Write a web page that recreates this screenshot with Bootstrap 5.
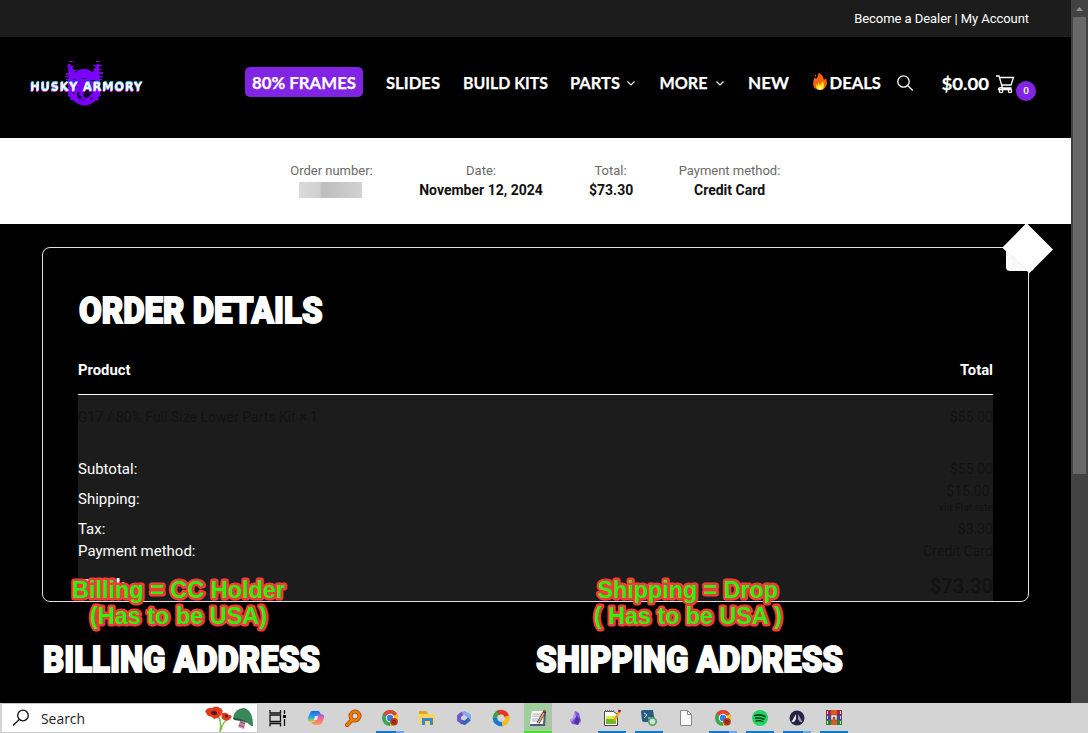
<!DOCTYPE html>
<html lang="en">
<head>
<meta charset="utf-8">
<meta name="viewport" content="width=device-width, initial-scale=1">
<title>Husky Armory - Order received</title>
<link href="https://cdn.jsdelivr.net/npm/bootstrap@5.3.0/dist/css/bootstrap.min.css" rel="stylesheet">
<style>
body{font-family:Roboto,"Liberation Sans",sans-serif;background:#000;color:#fff;height:733px;overflow:hidden}
svg{display:block;flex:none;overflow:visible}
svg text{white-space:pre}
.site{height:703px}
.page-col{width:1071px;background:#000}
.topbar{height:37px;background:#1c1c1c;font-size:13px;padding-right:42px;letter-spacing:-.06px}
.site-head{height:101px;padding-left:30px}
.brand-mark{width:215px}
.main-menu{font:700 17.4px/30px Lato,sans-serif;height:30px;margin-top:-11px}
.main-menu a{color:#fff;text-decoration:none;white-space:nowrap}
.hot{background:#8224e3;border-radius:5px;width:118px;margin-right:23px;justify-content:center}
.main-menu svg text,.cart-sum text{font:700 17.6px Lato,sans-serif;fill:#fff;stroke:#fff;stroke-width:.25}
.count-dot{width:20px;height:20px;border-radius:50%;background:#8224e3;font:700 9px/20px Lato,sans-serif;text-align:center;margin:17px 0 0 0}
.summary{height:86px;background:#fff;color:#111;padding:23px 0 0 291px;font-size:13px}
.summary .lbl{color:#6b6b6b;line-height:19px;letter-spacing:-.01px}
.summary .val{font-weight:700;font-size:14px;line-height:20px}
.masked{width:63px;height:16px;background:linear-gradient(90deg,#dadada,#d0d0d0 33%,#bebebe 36%,#c6c6c6 65%,#d1d2d4);margin:2px 0 0 8px}
.order-box{height:355px;margin:23px 42px 0 42px;border:1px solid #e2e2e2;border-radius:8px;padding:0 35px;position:relative}
.title-text{font:900 37px Roboto,sans-serif;fill:#fff;stroke:#fff;stroke-width:1.8px;stroke-linejoin:miter}
.thead-row{height:50px;border-bottom:1px solid #fff;font-weight:700;font-size:14.8px;padding-top:2px}
.lines{background:#1c1c1c;height:206px;font-size:14.5px}
.row-label{font-size:15px}
.lines .amt{color:#131313;text-align:right;font-size:14px}
.lines .grand{font-size:20px}
.corner{position:absolute;right:-26px;top:-25px}
.note{position:absolute}
.note text{font:700 23.5px "Liberation Sans",sans-serif;fill:#2bf20c;stroke:#f23a3a;stroke-width:5px;stroke-linejoin:round;paint-order:stroke}
.sb{width:17px;background:#424242}
.thumb{width:13px;height:457px;background:#686868}
.taskbar{height:30px;background:#d4d4d4}
.find{width:256px;height:30px;margin-left:2px;background:#fff;border:1px solid #c4c8ca;border-left:0;color:#222}
.slot{width:37px;height:30px;position:relative;display:flex;align-items:center;justify-content:center}
.slot-first{width:39px}
.run::after,.multi::after{content:"";position:absolute;left:5px;bottom:0;width:28px;height:2px;background:#0f79d0}
.multi::after{background:linear-gradient(90deg,#0f79d0 20px,#69abe2 20px)}
.active-app{background:linear-gradient(90deg,transparent 5px,#a0cf9b 5px 31px,#bbb 31px 33px,transparent 33px)}
.active-app::after{background:#46e231}
</style>
</head>
<body>
<div class="site d-flex">
<div class="page-col position-relative">
  <div class="topbar d-flex align-items-center justify-content-end"><span>Become a Dealer | My Account</span></div>

  <header class="site-head d-flex align-items-center">
    <div class="brand-mark">
      <svg width="114" height="56" viewBox="0 0 114 56">
        <g fill="#7b00ff" transform="translate(0 -2)">
          <path d="M38 6h2l5 8v1q3-4 9-4t9 4v-1l4-8h2v10l1 4v15q0 5-5 8-10 9-21 0-6-4-6-8V22l1-4z"/>
          <path d="M39 3h4v1h-4zM37 8h7v1h-7zM38 12h9v1h-9zM66 3h4v1h-4zM63 7h9v1h-9zM63 11h8v1h-8zM36 15h13v2H36zM61 14h12v2H61zM35 18h38v1H35zM36 21h36v1H36zM36 32h38v1H36zM38 37h33v1H38zM40 41h29v1H40z"/>
        </g>
        <path fill="#15002b" d="M43 19h3v1h-3zM52 18h4v1h-4zM60 20h5v1h-5zM47 32l3 1-1 2 3 2-2 3-3-4zM54 31l5-2 4 3-4 5-4 1-2-2zM43 31l2 4-2-1zM52 39l3 1-2 1zM61 37l2 1-3 3z"/>
        <g font-family="DejaVu Sans,sans-serif" font-weight="700" font-size="11.5">
          <text x="-.4" y="31.800" fill="#d33ddc" textLength="112">HUSKY ARMORY</text>
          <text x=".6" y="30.200" fill="#21cbd6" textLength="112">HUSKY ARMORY</text>
          <text x="0" y="31" fill="#f3f5ff" textLength="112">HUSKY ARMORY</text>
        </g>
      </svg>
    </div>
    <nav class="main-menu d-flex align-items-center">
      <a class="hot d-flex" href="#"><svg width="104" height="30"><text y="21.500" textLength="104" lengthAdjust="spacingAndGlyphs">80% FRAMES</text></svg></a>
      <a href="#"><svg width="77" height="30"><text y="21.500" textLength="54" lengthAdjust="spacingAndGlyphs">SLIDES</text></svg></a>
      <a href="#"><svg width="107" height="30"><text y="21.500" textLength="85" lengthAdjust="spacingAndGlyphs">BUILD KITS</text></svg></a>
      <a href="#"><svg width="90" height="30"><text y="21.500" textLength="50" lengthAdjust="spacingAndGlyphs">PARTS</text><path d="M57.500 14.500l3.500 3.500 3.500-3.500" fill="none" stroke="#fff" stroke-width="1.200"/></svg></a>
      <a href="#"><svg width="88" height="30"><text y="21.500" x="-.5" textLength="48" lengthAdjust="spacingAndGlyphs">MORE</text><path d="M56.500 14.500l3.500 3.500 3.500-3.500" fill="none" stroke="#fff" stroke-width="1.200"/></svg></a>
      <a href="#"><svg width="64" height="30"><text y="21.500" textLength="41" lengthAdjust="spacingAndGlyphs">NEW</text></svg></a>
      <a href="#"><svg width="85" height="30"><g transform="translate(1 0)"><path fill="#f7630c" d="M5 6q5 1 6 7l2-2q1 3 1 6-2 6-7 6-6 0-7-6 0-4 2-7l1 2q3-3 2-6"/><path fill="#f7630c" d="M2 8h1v1H2z"/><path fill="#ffe019" d="M5 15l2 3 3-4q3 9-3 9-5-1-4-6l2 2z"/><path fill="#fff3b0" d="M5 21l2-2 2 2-2 2z"/></g><text y="21.500" x="17.500" textLength="51.500" lengthAdjust="spacingAndGlyphs">DEALS</text></svg></a>
      <svg width="45" height="30" fill="none" stroke="#fff" stroke-width="1.300"><circle cx="6.500" cy="14.500" r="5.700"/><path d="M10.800 18.800l5 4.700"/></svg>
      <svg class="cart-sum" width="74" height="30"><text y="22.500" x="-.5" textLength="47.500" lengthAdjust="spacingAndGlyphs">$0.00</text><g fill="none" stroke="#fff" stroke-width="1.300"><path d="M54 9h3l3.500 12h9M58 10.500h13.500L69 18H60M60.500 21q-4-1-4 1.500h13"/><circle cx="59" cy="24" r="1.700"/><circle cx="68" cy="24" r="1.700"/></g></svg>
      <span class="count-dot">0</span>
    </nav>
  </header>

  <section class="summary d-flex text-center">
    <div style="width:82px"><div class="lbl text-nowrap" style="margin-left:-1px">Order number:</div><div class="masked"></div></div>
    <div style="width:216px"><div class="lbl">Date:</div><div class="val">November 12, 2024</div></div>
    <div style="width:43px"><div class="lbl">Total:</div><div class="val">$73.30</div></div>
    <div style="width:195px"><div class="lbl">Payment method:</div><div class="val">Credit Card</div></div>
  </section>

  <section class="order-box">
    <svg width="300" height="97"><text class="title-text" x="1" y="75" textLength="243.500" lengthAdjust="spacingAndGlyphs">ORDER DETAILS</text></svg>
    <div class="thead-row d-flex align-items-center justify-content-between"><span>Product</span><span>Total</span></div>
    <div class="lines">
      <div class="d-flex justify-content-between align-items-center" style="height:45px"><span class="amt">G17 / 80% Full Size Lower Parts Kit × 1</span><span class="amt">$55.00</span></div>
      <div class="d-flex justify-content-between align-items-center" style="height:21px;margin-top:19px"><span class="row-label">Subtotal:</span><span class="amt">$55.00</span></div>
      <div class="d-flex justify-content-between align-items-center" style="height:38px"><span class="row-label">Shipping:</span><span class="amt lh-1 pt-1">$15.00&nbsp;<br><span style="font-size:10.500px;line-height:20px">via Flat rate</span></span></div>
      <div class="d-flex justify-content-between align-items-center" style="height:22px"><span class="row-label">Tax:</span><span class="amt">$3.30</span></div>
      <div class="d-flex justify-content-between align-items-center" style="height:22px"><span class="row-label">Payment method:</span><span class="amt">Credit Card</span></div>
      <div class="d-flex justify-content-between align-items-center fw-bold" style="height:30px;margin-top:9px"><span style="font-size:19px">Total:</span><span class="amt grand">$73.30</span></div>
    </div>
    <svg class="corner" width="52" height="52"><rect x="4" y="22" width="28" height="26" rx="4" fill="#fafafa"/><path d="M24.500 0L51 26.500 27.500 50 .5 24.500z" fill="#fff"/><path d="M.5 24.500L27.500 50" stroke="#e5e5e5" stroke-width=".8"/></svg>
  </section>

  <section class="d-flex" style="padding-left:42px">
    <svg width="493" height="90"><text class="title-text" x="1" y="70" textLength="277" lengthAdjust="spacingAndGlyphs">BILLING ADDRESS</text></svg>
    <svg width="400" height="90"><text class="title-text" x="1" y="70" textLength="307" lengthAdjust="spacingAndGlyphs">SHIPPING ADDRESS</text></svg>
  </section>

  <svg class="note" style="left:60px;top:570px" width="240" height="66"><text x="12" y="28" textLength="213" lengthAdjust="spacingAndGlyphs">Billing = CC Holder</text><text x="30" y="54" textLength="177" lengthAdjust="spacingAndGlyphs">(Has to be USA)</text></svg>
  <svg class="note" style="left:580px;top:570px" width="220" height="66"><text x="17.500" y="28" textLength="180.500" lengthAdjust="spacingAndGlyphs">Shipping = Drop</text><text x="14" y="54" textLength="188" lengthAdjust="spacingAndGlyphs">( Has to be USA )</text></svg>
</div>
<div class="sb d-flex flex-column align-items-center">
  <svg width="17" height="17"><path d="M5 11l3.500-4 3.500 4z" fill="#929292"/></svg>
  <div class="thumb"></div>
</div>
</div>

<footer class="taskbar d-flex">
  <div class="find d-flex align-items-center">
    <svg width="39" height="28" fill="none" stroke="#111" stroke-width="1.300"><circle cx="21" cy="11.500" r="5.300"/><path d="M17.300 15.500L11 21.500"/></svg>
    <svg width="163" height="28"><text x="0" y="20" font-family="Open Sans,sans-serif" font-size="14.500" fill="#222" textLength="44" lengthAdjust="spacingAndGlyphs">Search</text></svg>
    <svg width="54" height="28"><path d="M14 12q4 6 2 16M24 15q-6 4-7 11" fill="none" stroke="#79bb45" stroke-width="1.500"/><path fill="#e2391d" d="M1 7q3-4 7-3 4-3 8 0 4 2 2 5-2 5-8 6-2-3-6-3zM18 9q5-1 7 2 4 0 2 3-3 4-7 2-4-2-2-7"/><ellipse cx="10" cy="9" rx="3" ry="2" fill="#521b18"/><circle cx="22.500" cy="12" r="1.500" fill="#521b18"/><path fill="#cf8ba4" d="M37 14l5 2-2 9-6-2z"/><path stroke="#854867" d="M36 18l5 2M35 21l5 2"/><path fill="#3a885a" d="M29 14q2-10 11-10 9 2 9 18-1 1-3-1-4-5-14-5-3-1-3-2"/><path fill="#225b3a" d="M29 14q8-1 18 7-5-4-17-5z"/></svg>
  </div>
  <div class="slot slot-first"><svg width="18" height="18" fill="none" stroke="#111" stroke-width="1.300"><path d="M1 1v3h10.500V1M1 6h10.500v6.500H1zM1 17.500v-3h10.500v3M15.500 1v4M15.500 10v7"/><path d="M14 7.500h3" stroke-width="3"/></svg></div>
  <div class="slot"><svg width="18" height="18"><defs><linearGradient id="cpA" x2="0" y2="1"><stop stop-color="#1769e8"/><stop offset=".6" stop-color="#23afe3"/><stop offset="1" stop-color="#f2cd27"/></linearGradient><linearGradient id="cpB" x2="0" y2="1"><stop stop-color="#a75be6"/><stop offset=".5" stop-color="#f86e88"/><stop offset="1" stop-color="#f9a24b"/></linearGradient></defs><path fill="url(#cpA)" d="M5 2h6q2 0 3 4-4-1-5 3-1 4-3 4H4Q0 13 1 9l2-5q1-2 2-2"/><path fill="url(#cpB)" d="M13 5q5 0 4 4l-2 5q-1 2-4 2H7q-2-1-3-3 4 1 5-3 1-5 4-5"/><path fill="#e8e3ec" d="M8 7h3l-1 4H7z"/></svg></div>
  <div class="slot"><svg width="18" height="18" fill="none"><circle cx="11" cy="7" r="4.500" stroke="#a74300" stroke-width="4"/><path d="M8 11l-5 5" stroke="#a74300" stroke-width="4" stroke-linecap="round"/><circle cx="11" cy="7" r="4.500" stroke="#f37b05" stroke-width="2.500"/><path d="M8 11l-5 5" stroke="#f37b05" stroke-width="2.500" stroke-linecap="round"/></svg></div>
  <div class="slot multi"><svg width="18" height="18"><g id="browser" transform="translate(1 1)"><circle cx="8" cy="8" r="8" fill="#36a852"/><path d="M8 8L1.100 4A8 8 0 0 1 15 4z" fill="#df4636"/><path d="M8 8l7-4a8 8 0 0 1-7 12z" fill="#fbc116"/><circle cx="8" cy="8" r="4.200" fill="#fff"/><circle cx="8" cy="8" r="3.200" fill="#377ce5"/><circle cx="12" cy="11.800" r="3.800" fill="#b53b20"/><circle cx="12" cy="11.800" r="1.500" fill="none" stroke="#732010"/></g></svg></div>
  <div class="slot"><svg width="18" height="18"><path fill="#e0a51c" d="M1 2h7l2 2v4H1z"/><path fill="#ffd45b" d="M1 5h16v10H1z"/><path fill="#3289d7" d="M4 9h11v7h-3v-4H7v4H4z"/></svg></div>
  <div class="slot"><svg width="18" height="18" fill="none" stroke-width="4" stroke-linejoin="round"><path d="M8 14l-4-3V7l4-3" stroke="#7355ce"/><path d="M8 3.500l6 3v4" stroke="#85a9ea"/><path d="M14.500 10l-5 4-3-1.500" stroke="#3b63b8"/></svg></div>
  <div class="slot"><svg width="18" height="18" fill="none" stroke-width="4.500"><path d="M3 10a6 6 0 0 1 5-7" stroke="#35a547"/><path d="M6 4a6 6 0 0 1 9 4" stroke="#e63625"/><path d="M15 7a6 6 0 0 1-6 8" stroke="#f4be21"/><path d="M10 15a6 6 0 0 1-7-6" stroke="#1976d2"/></svg></div>
  <div class="slot run active-app"><svg width="18" height="18"><path fill="#575284" d="M4 3h13l-1 14H1z"/><path fill="#fff" d="M3 2h12l-1 13H1z"/><path stroke="#a6a7bd" d="M4 5h8M3 7h8M3 10h6M3 12h5"/><path stroke="#3a2630" stroke-width="3" d="M16 2L9 14"/><path stroke="#e8b058" stroke-width="1.500" d="M15 4L9 14"/><path stroke="#c74035" stroke-width="2" d="M16 1l-1 2"/></svg></div>
  <div class="slot"><svg width="18" height="18"><path fill="#8158d9" d="M9 2l4 2 1 4 1 4-3 4-6-1-2-4 3-2z"/><path fill="#5631a5" d="M10 7l4 3-2 6-4-2z"/><path fill="#b69bf3" d="M9 2l1 6-5 5-1-2 3-2z"/></svg></div>
  <div class="slot run"><svg width="18" height="18"><path fill="#fff" stroke="#464646" d="M1.500 2.500h9l4 3v11h-13z"/><path stroke="#777" stroke-dasharray="1 1" stroke-width="2" d="M2 2h9"/><path fill="#71b91f" d="M3 9q4-2 10 0v6H3z"/><path fill="#dbea4d" d="M3 7h10v3H3z"/><path stroke="#e7a11d" stroke-width="2.500" d="M16 3l-5 9"/><path stroke="#861b22" stroke-width="2.500" d="M17 1l-1 2"/></svg></div>
  <div class="slot run"><svg width="18" height="18"><path fill="#285b86" d="M1 3q0-2 2-2h10l2 12H4q-2 0-2-2z"/><path d="M4 4l3 2-3 3M8 9h3" fill="none" stroke="#dcecf8"/><circle cx="12.500" cy="12.500" r="3.700" fill="#cfe2d1" stroke="#54a465" stroke-width="1.700"/></svg></div>
  <div class="slot"><svg width="18" height="18"><path fill="#fbfbfb" stroke="#888" d="M3.500 1.500h7l4 4v11h-11z"/><path d="M10.500 1.500v4h4" fill="none" stroke="#888"/></svg></div>
  <div class="slot multi"><svg width="18" height="18"><use href="#browser"/></svg></div>
  <div class="slot run"><svg width="18" height="18" fill="none" stroke="#123b20" stroke-linecap="round"><circle cx="9" cy="9" r="8" fill="#1ed760" stroke="none"/><path stroke-width="1.800" d="M4 6.500q5-1.500 10 1"/><path stroke-width="1.500" d="M4.500 9.300q4-1 8.500 1"/><path stroke-width="1.300" d="M5 12q4-1 7 .8"/></svg></div>
  <div class="slot multi"><svg width="18" height="18"><circle cx="9" cy="9" r="7.500" fill="#282344"/><path fill="#e9e6f2" d="M8 5v5l-2 3H3.500z"/><path fill="#a397bd" d="M10 5l4.500 8H12l-2-3z"/></svg></div>
  <div class="slot run"><svg width="18" height="18"><path fill="#a82547" d="M1 1h16v5H1z"/><path fill="#4045a0" d="M1 6h16v5H1z"/><path fill="#28803a" d="M1 11h16v5H1z"/><path stroke="#ded8a5" d="M2.500 2v3M2.500 7v3M2.500 12v3M15.500 2v3M15.500 7v3M15.500 12v3"/><path fill="#d95b1d" d="M6 1h6v15H6z"/><path fill="#fff" stroke="#713d2c" stroke-width=".6" d="M6 6h6v5h-2V8H8v3H6z"/></svg></div>
</footer>
<script src="https://cdn.jsdelivr.net/npm/bootstrap@5.3.0/dist/js/bootstrap.bundle.min.js"></script>
</body>
</html>
